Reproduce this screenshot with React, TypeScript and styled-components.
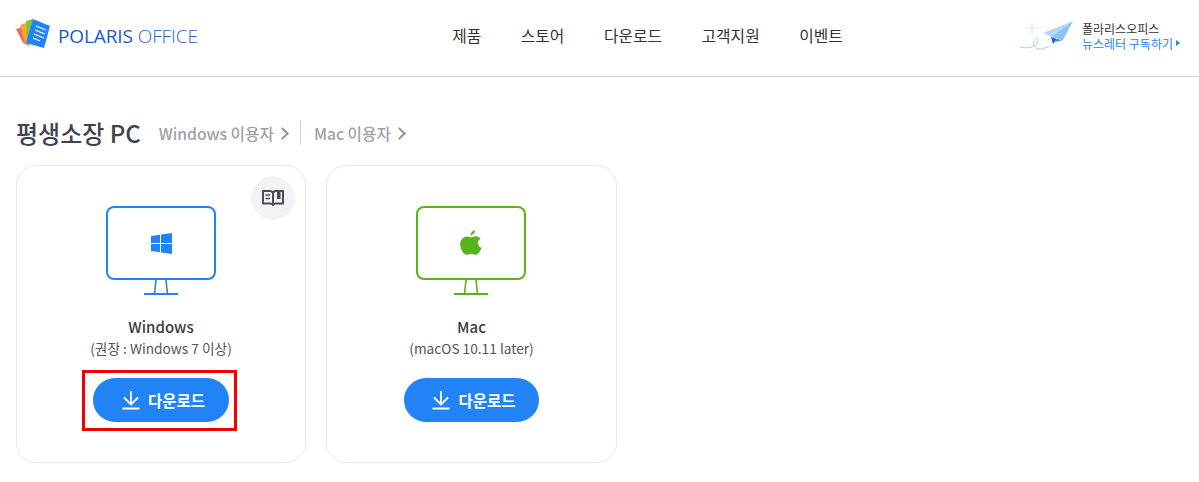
import React from 'react';
import styled, { createGlobalStyle } from 'styled-components';

const GlobalStyle = createGlobalStyle`
	html, body {
		margin: 0;
		padding: 0;
		background: #fff;
	}
	body {
		font-family: 'Noto Sans CJK KR', 'Noto Sans', sans-serif;
		color: #333;
	}
	* {
		box-sizing: border-box;
	}
`;

const NAV_ITEMS = ['제품', '스토어', '다운로드', '고객지원', '이벤트'];

const LogoMark = () => (
	<svg width="36" height="32" viewBox="0 1 36 32" style={{ overflow: 'visible' }}>
		<path d="M0 10 L6 8 L13 27 L7 24 Z" fill="#f26a5e" />
		<path d="M4 6 L10 4 L13 27 L9 24 Z" fill="#f9a33a" />
		<path d="M10 2 L17 0 L14 26 L11 24 Z" fill="#7cc142" />
		<path d="M17 0 L34 7 L28 29 L10 24 Z" fill="#2283f6" />
		<path d="M20 7 L30 11 M19 11 L29 15 M18 15 L28 19 M17 19 L24 22" stroke="#fff" strokeWidth="1.2" />
	</svg>
);

const PlaneIcon = () => (
	<svg width="54" height="36" viewBox="0 0 54 36">
		<path d="M12 4 V16 M6 10 H18" stroke="#d3e5f9" strokeWidth="1" />
		<path d="M0 29 C 8 31 14 29 17 25 C 20 20 16 18 14 23 C 12 29 17 32 22 31 C 25 30 28 29 30 28" stroke="#a9cdf5" strokeWidth="1" fill="none" />
		<path d="M53 3 L23 15 L31 19 Z" fill="#b5d6fa" />
		<path d="M53 3 L31 19 L43 22 Z" fill="#8fc1f7" />
		<path d="M31 19 L37 21 L33 26 Z" fill="#1f66b8" />
		<path d="M37 21 L43 22 L35 24 Z" fill="#3f8be0" />
	</svg>
);

const BookIcon = () => (
	<svg width="22" height="18" viewBox="0 0 22 18" fill="none" stroke="#474c57" strokeWidth="2" strokeLinejoin="round">
		<path d="M1 2 H8 C9.8 2 11 3 11 4.5 V16 C11 15 9.8 14.5 8 14.5 H1 Z" />
		<path d="M21 2 H14 C12.2 2 11 3 11 4.5 V16 C11 15 12.2 14.5 14 14.5 H21 Z" />
		<path d="M3.5 6 H8 M3.5 9.5 H8" strokeWidth="1.4" />
		<path d="M15 2 H18.5 V10 H15 Z" fill="#474c57" stroke="none" />
	</svg>
);

const WindowsIcon = ({ color }: { color: string }) => (
	<svg width="21" height="21" viewBox="0 0 21 21" fill={color}>
		<path d="M0 3 L9 1.7 V10 H0 Z" />
		<path d="M10 1.5 L21 0 V10 H10 Z" />
		<path d="M0 11 H9 V19.3 L0 18 Z" />
		<path d="M10 11 H21 V21 L10 19.5 Z" />
	</svg>
);

const AppleIcon = ({ color }: { color: string }) => (
	<svg width="23" height="26" viewBox="0 0 23 26" fill={color}>
		<path d="M14.8 0 C15 2.8 13 5.2 10.8 5.4 C10.4 3 12.6 .6 14.8 0 Z" />
		<path d="M7 6.4 C8.6 6.4 10 7.3 11.2 7.3 C12.4 7.3 13.8 6.2 15.8 6.2 C17.6 6.2 19.5 7.2 20.6 8.8 C18.4 10 17.6 11.6 17.8 13.6 C18 15.6 19.2 17 21.5 18 C20.4 20.8 18.4 24.6 16 24.7 C14.4 24.8 13.4 23.7 11.4 23.7 C9.4 23.7 8.4 24.7 6.8 24.8 C4 24.8 .2 19.8 .2 14.2 C.2 9.4 3.4 6.4 7 6.4 Z" />
	</svg>
);

const DownloadIcon = () => (
	<svg width="20" height="20" viewBox="0 0 20 20" fill="none" stroke="#fff" strokeWidth="1.8">
		<path d="M10 1 V14 M3 7.5 L10 14.5 L17 7.5 M1.5 18.5 H18.5" />
	</svg>
);

const Monitor = ({ color, children }: { color: string; children: React.ReactNode }) => (
	<MonitorWrap>
		<MonitorScreen $color={color}>{children}</MonitorScreen>
		<svg width="36" height="15" viewBox="0 0 36 15" fill="none" stroke={color} strokeWidth="1.6">
			<path d="M13 0 L11.5 14 M23 0 L24.5 14" />
			<path d="M1 14 H35" strokeWidth="2" />
		</svg>
	</MonitorWrap>
);

const PlatformCard = ({
	name,
	note,
	color,
	icon,
	guide,
	marked,
	wide,
}: {
	name: string;
	note: string;
	color: string;
	icon: React.ReactNode;
	guide?: boolean;
	marked?: boolean;
	wide?: boolean;
}) => (
	<Card $wide={wide}>
		{guide && (
			<GuideButton>
				<BookIcon />
			</GuideButton>
		)}
		<Monitor color={color}>{icon}</Monitor>
		<CardName>{name}</CardName>
		<CardNote>{note}</CardNote>
		<ButtonSlot>
			{marked && <Highlight />}
			<DownloadButton>
				<DownloadIcon />
				다운로드
			</DownloadButton>
		</ButtonSlot>
	</Card>
);

const App = () => (
	<>
		<GlobalStyle />
		<Header>
			<Logo>
				<LogoMark />
				<LogoText>
					POLARIS <LogoLight>OFFICE</LogoLight>
				</LogoText>
			</Logo>
			<Nav>
				{NAV_ITEMS.map((item) => (
					<NavItem key={item}>{item}</NavItem>
				))}
			</Nav>
			<Newsletter>
				<PlaneIcon />
				<NewsletterText>
					<NewsletterTop>폴라리스오피스</NewsletterTop>
					<NewsletterLink>
						뉴스레터 구독하기
						<Caret />
					</NewsletterLink>
				</NewsletterText>
			</Newsletter>
		</Header>
		<Main>
			<TitleRow>
				<Title>평생소장 PC</Title>
				<TitleLink>
					Windows 이용자
					<Chevron />
				</TitleLink>
				<TitleDivider />
				<TitleLink>
					Mac 이용자
					<Chevron />
				</TitleLink>
			</TitleRow>
			<Cards>
				<PlatformCard
					name="Windows"
					note="(권장 : Windows 7 이상)"
					color="#2283f6"
					icon={<WindowsIcon color="#2283f6" />}
					guide
					marked
				/>
				<PlatformCard
					name="Mac"
					note="(macOS 10.11 later)"
					color="#56b41c"
					icon={<AppleIcon color="#56b41c" />}
					wide
				/>
			</Cards>
		</Main>
	</>
);

export default App;

const Header = styled.header`
	display: grid;
	grid-template-columns: 1fr auto 1fr;
	align-items: center;
	height: 77px;
	padding: 0 19px 0 16px;
	border-bottom: 1px solid #d2d2d2;
`;

const Logo = styled.div`
	display: flex;
	align-items: center;
	gap: 6px;
	margin-top: -5px;
`;

const LogoText = styled.span`
	font-family: 'Open Sans', sans-serif;
	font-size: 19px;
	font-weight: 400;
	letter-spacing: -0.1px;
	color: #1a5bc0;
`;

const LogoLight = styled.span`
	font-weight: 300;
	color: #2a66c6;
`;

const Nav = styled.nav`
	display: flex;
	gap: 39.5px;
	margin: -4px 0 0 99px;
`;

const NavItem = styled.a`
	font-size: 15.8px;
	color: #333;
	line-height: 24px;
`;

const Newsletter = styled.div`
	display: flex;
	align-items: center;
	justify-content: flex-end;
	gap: 8px;
	margin-top: -5px;
`;

const NewsletterText = styled.div`
	display: flex;
	flex-direction: column;
`;

const NewsletterTop = styled.span`
	font-size: 12px;
	line-height: 15px;
	color: #333;
`;

const NewsletterLink = styled.span`
	display: flex;
	align-items: center;
	gap: 3px;
	font-size: 12px;
	line-height: 15px;
	color: #2283f6;
`;

const Caret = styled.i`
	width: 0;
	height: 0;
	border-left: 4px solid #2283f6;
	border-top: 3.5px solid transparent;
	border-bottom: 3.5px solid transparent;
`;

const Main = styled.main`
	padding: 40px 16px 0;
`;

const TitleRow = styled.div`
	display: flex;
	align-items: center;
	height: 32px;
`;

const Title = styled.h2`
	margin: 0 18px 0 0;
	font-size: 24px;
	font-weight: 500;
	line-height: 32px;
	color: #3d4450;
`;

const TitleLink = styled.a`
	display: flex;
	align-items: center;
	font-size: 15.7px;
	font-weight: 500;
	color: #9da1a8;
`;

const Chevron = styled.i`
	width: 9px;
	height: 9px;
	margin: 1px 3px 0 4px;
	border-top: 2px solid #8f9298;
	border-right: 2px solid #8f9298;
	transform: rotate(45deg);
`;

const TitleDivider = styled.span`
	width: 1px;
	height: 24px;
	margin: 0 13px 0 10px;
	background: #c9ccd1;
`;

const Cards = styled.div`
	display: flex;
	gap: 20px;
	margin-top: 16px;
`;

const MonitorWrap = styled.div`
	display: flex;
	flex-direction: column;
	align-items: center;
`;

const Card = styled.section<{ $wide?: boolean }>`
	position: relative;
	display: flex;
	flex-direction: column;
	align-items: center;
	width: ${(props) => (props.$wide ? '291px' : '290px')};
	height: 298px;
	padding-top: 40px;
	border: 1px solid #e8e8e8;
	border-radius: 20px;

	${MonitorWrap} {
		margin-right: ${(props) => (props.$wide ? '1px' : '0')};
	}
`;

const GuideButton = styled.button`
	position: absolute;
	top: 10px;
	right: 10px;
	display: flex;
	align-items: center;
	justify-content: center;
	width: 44px;
	height: 44px;
	padding: 0;
	border: 0;
	border-radius: 50%;
	background: #f2f3f5;
`;

const MonitorScreen = styled.div<{ $color: string }>`
	display: flex;
	align-items: center;
	justify-content: center;
	width: 110px;
	height: 74px;
	border: 2px solid ${(props) => props.$color};
	border-radius: 8px;
`;

const CardName = styled.div`
	margin-top: 21px;
	font-size: 15px;
	font-weight: 500;
	line-height: 22px;
	color: #3d3d3d;
`;

const CardNote = styled.div`
	font-size: 13.7px;
	line-height: 20px;
	color: #555;
`;

const ButtonSlot = styled.div`
	position: relative;
	margin-top: 20px;
`;

const Highlight = styled.div`
	position: absolute;
	top: -8px;
	left: -11px;
	width: 155px;
	height: 61px;
	border: 3px solid #f00000;
`;

const DownloadButton = styled.button`
	position: relative;
	display: flex;
	align-items: center;
	justify-content: center;
	gap: 7px;
	width: 135.5px;
	height: 44px;
	padding: 0 0 0 4px;
	border: 0;
	border-radius: 22px;
	background: #2283f6;
	font-family: inherit;
	font-size: 15.5px;
	font-weight: 700;
	color: #fff;
`;
